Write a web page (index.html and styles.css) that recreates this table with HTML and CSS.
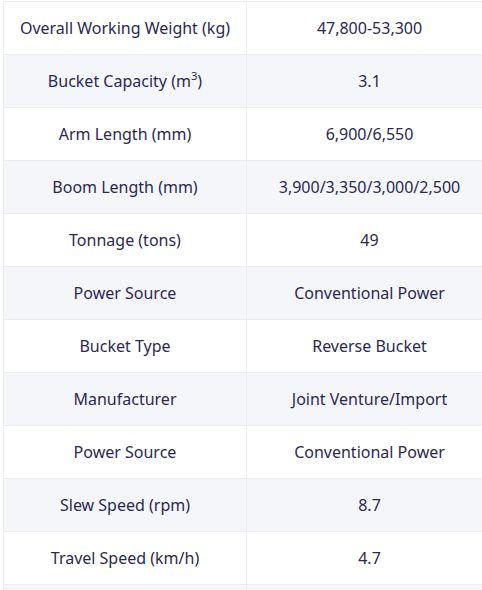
FILE: index.html
```html
<!DOCTYPE html>
<html lang="en">
<head>
<meta charset="utf-8">
<title>Specifications</title>
<link rel="stylesheet" href="styles.css">
</head>
<body>
<div class="wrap">
<table class="specs">
<tbody>
<tr><td>Overall Working Weight (kg)</td><td>47,800-53,300</td></tr>
<tr><td>Bucket Capacity (m<sup>3</sup>)</td><td>3.1</td></tr>
<tr><td>Arm Length (mm)</td><td>6,900/6,550</td></tr>
<tr><td>Boom Length (mm)</td><td>3,900/3,350/3,000/2,500</td></tr>
<tr><td>Tonnage (tons)</td><td>49</td></tr>
<tr><td>Power Source</td><td>Conventional Power</td></tr>
<tr><td>Bucket Type</td><td>Reverse Bucket</td></tr>
<tr><td>Manufacturer</td><td>Joint Venture/Import</td></tr>
<tr><td>Power Source</td><td>Conventional Power</td></tr>
<tr><td>Slew Speed (rpm)</td><td>8.7</td></tr>
<tr><td>Travel Speed (km/h)</td><td>4.7</td></tr>
<tr><td>&nbsp;</td><td>&nbsp;</td></tr>
</tbody>
</table>
</div>
</body>
</html>
```
FILE: styles.css
```css
html, body {
  margin: 0;
  padding: 0;
  background: #ffffff;
}
.wrap {
  width: 482px;
  height: 590px;
  overflow: hidden;
  padding: 1px 0 0 3px;
  box-sizing: border-box;
}
.specs {
  border-collapse: collapse;
  width: 490px;
  table-layout: fixed;
  font-family: "Noto Sans", "Open Sans", sans-serif;
  font-size: 16px;
  color: #2b2856;
}
.specs td {
  border: 1px solid #ebecf0;
  height: 53px;
  padding: 0 8px;
  text-align: center;
  vertical-align: middle;
  box-sizing: border-box;
  white-space: nowrap;
}
.specs td:first-child {
  width: 243px;
}
.specs tr:nth-child(even) td {
  background: #f5f6fa;
}
.specs sup {
  font-size: 0.7em;
  line-height: 0;
  vertical-align: 0.6em;
}
```
